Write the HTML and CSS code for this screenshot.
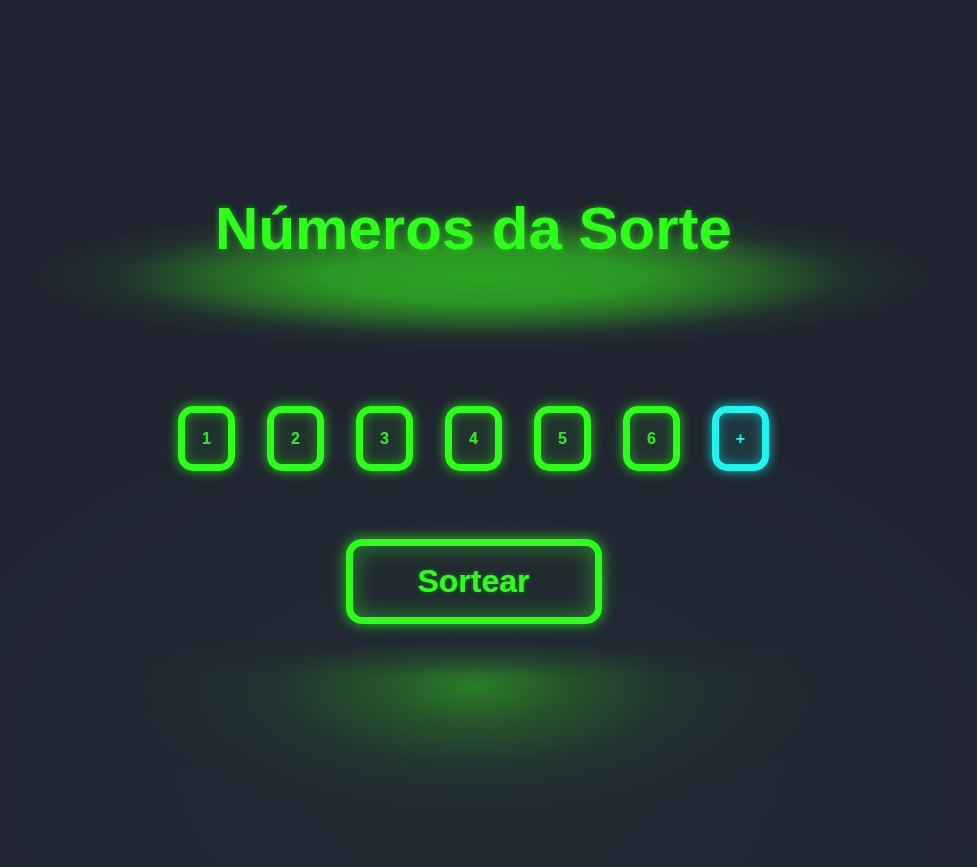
FILE: index.html
```html
<!DOCTYPE html>
<html lang="pt">
<head>
<meta charset="utf-8">
<title>Números da Sorte</title>
<link rel="stylesheet" href="styles.css">
</head>
<body>
<main class="stage">
  <h1 class="title">Números da Sorte</h1>
  <div class="balls">
    <div class="ball">1</div>
    <div class="ball">2</div>
    <div class="ball">3</div>
    <div class="ball">4</div>
    <div class="ball">5</div>
    <div class="ball">6</div>
    <div class="ball ball-bonus">+</div>
  </div>
  <button class="draw" type="button">Sortear</button>
  <div class="floor-glow"></div>
</main>
</body>
</html>
```

FILE: styles.css
```css
html, body {
  margin: 0;
  height: 100%;
}

body {
  background: radial-gradient(ellipse 62% 45% at 49% 88%, #232a34 0%, #212833 55%, #1f2430 100%);
  background-color: #20252f;
  font-family: "Liberation Sans", Arial, sans-serif;
  overflow: hidden;
}

.stage {
  position: relative;
  display: flex;
  flex-direction: column;
  align-items: center;
  padding: 194px 30px 0 0;
  min-height: 100%;
  box-sizing: border-box;
}

.title {
  position: relative;
  margin: 0;
  font-size: 60px;
  font-weight: bold;
  line-height: 69px;
  color: #2dff1a;
  text-shadow: 0 0 6px rgba(45, 255, 26, 0.55);
  z-index: 1;
}

.stage::before {
  content: "";
  position: absolute;
  left: 28px;
  right: 40px;
  top: 204px;
  height: 146px;
  background: radial-gradient(closest-side, rgba(44, 168, 35, 0.98) 0%, rgba(44, 160, 35, 0.92) 35%, rgba(44, 140, 36, 0.65) 58%, rgba(40, 90, 42, 0.25) 80%, rgba(32, 37, 48, 0) 100%);
  z-index: 0;
}

.balls {
  position: relative;
  z-index: 1;
  display: flex;
  gap: 32px;
  margin-top: 143px;
}

.ball {
  width: 57px;
  height: 65px;
  box-sizing: border-box;
  border: 7px solid #2dff1a;
  border-radius: 15px;
  display: flex;
  align-items: center;
  justify-content: center;
  font-size: 16px;
  font-weight: bold;
  color: #33e626;
  background: rgba(40, 90, 40, 0.25);
  box-shadow: 0 0 12px rgba(45, 255, 26, 0.75), inset 0 0 12px rgba(45, 255, 26, 0.45);
}

.ball-bonus {
  border-color: #1ff5f0;
  color: #1ff0ec;
  background: rgba(30, 110, 110, 0.25);
  box-shadow: 0 0 12px rgba(31, 245, 240, 0.75), inset 0 0 12px rgba(31, 245, 240, 0.45);
}

.draw {
  position: relative;
  z-index: 1;
  margin-top: 68px;
  width: 256px;
  height: 85px;
  box-sizing: border-box;
  border: 7px solid #2dff1a;
  border-radius: 16px;
  background: rgba(35, 45, 50, 0.6);
  color: #2dff1a;
  font-family: "Liberation Sans", Arial, sans-serif;
  font-size: 32px;
  font-weight: bold;
  padding: 0;
  box-shadow: 0 0 14px rgba(45, 255, 26, 0.75), inset 0 0 22px rgba(45, 255, 26, 0.45);
  text-shadow: 0 0 4px rgba(45, 255, 26, 0.4);
}

.floor-glow {
  width: 780px;
  height: 200px;
  margin-top: 16px;
  background: radial-gradient(ellipse 345px 140px at 50% 46px, rgba(44, 135, 38, 0.9) 0%, rgba(40, 112, 38, 0.62) 26%, rgba(36, 76, 45, 0.3) 58%, rgba(32, 37, 48, 0) 100%);
  -webkit-mask-image: linear-gradient(to bottom, transparent 0, #000 36px);
  mask-image: linear-gradient(to bottom, transparent 0, #000 36px);
}
```
